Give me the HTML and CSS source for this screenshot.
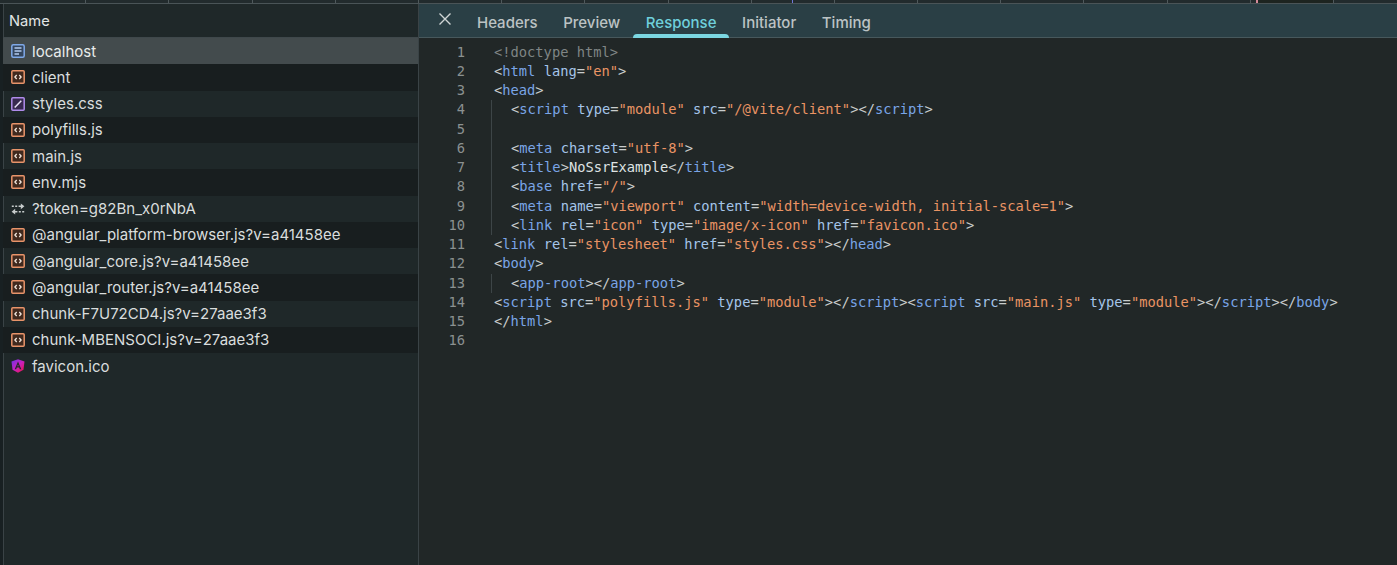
FILE: index.html
```html
<!DOCTYPE html>
<html lang="en">
<head>
    <meta charset="UTF-8">
    <title>Network - Response</title>
    <link rel="stylesheet" href="styles.css">
</head>
<body>
    <svg class="defs" width="0" height="0">
        <defs>
            <linearGradient id="ngFill" x1="0" y1="0" x2="1" y2="1">
                <stop offset="0" stop-color="#6a34e8"/>
                <stop offset="0.5" stop-color="#c820c0"/>
                <stop offset="1" stop-color="#f0143c"/>
            </linearGradient>
            <symbol id="i-doc" viewBox="0 0 14 14">
                <rect x="0.8" y="0.8" width="12.400" height="12.400" rx="1.500" fill="#34465e" stroke="#7fa9e8" stroke-width="1.500"/>
                <path d="M3.500 4h7M3.500 7h7M3.500 10h4.500" stroke="#b2cbef" stroke-width="1.300" fill="none"/>
            </symbol>
            <symbol id="i-script" viewBox="0 0 14 14">
                <rect x="0.8" y="0.8" width="12.400" height="12.400" rx="1" fill="#40291e" stroke="#e8946a" stroke-width="1.500"/>
                <path d="M5.700 5 3.900 7l1.800 2M8.300 5l1.800 2-1.800 2" stroke="#f2e6dc" stroke-width="1.300" fill="none"/>
            </symbol>
            <symbol id="i-css" viewBox="0 0 14 14">
                <rect x="0.8" y="0.8" width="12.400" height="12.400" rx="1" fill="#38294f" stroke="#b08cea" stroke-width="1.500"/>
                <path d="M3.700 10.500 10.300 3.700" stroke="#e8e0f6" stroke-width="1.500" fill="none"/>
            </symbol>
            <symbol id="i-socket" viewBox="0 0 14 14">
                <path d="M.8 4.300h2M4.200 4.300h2M7.600 4.300h2.400M4 9.700h2.400M7.800 9.700h2M11.200 9.700h2" stroke="#c8cdcd" stroke-width="1.400" fill="none"/>
                <path d="M9.800 1.400 13.400 4.300 9.800 7.200zM4.200 6.800.6 9.700l3.600 2.900z" fill="#c8cdcd"/>
            </symbol>
            <symbol id="i-ng" viewBox="0 0 14 14">
                <path d="M7 .3 13.500 2.600 12.500 10.700 7 13.700 1.500 10.700.5 2.600z" fill="url(#ngFill)"/>
                <path d="M7 2.600 3.700 10.200h1.500l.6-1.700h2.400l.6 1.700h1.500zM6.300 7.300 7 5.500l.7 1.800z" fill="#20282a"/>
            </symbol>
        </defs>
    </svg>

    <div class="ruler">
        <span></span><span></span><span></span><span></span><span></span><span></span><span></span><span></span><span></span>
        <span class="half mark-blue"></span><span class="half"></span><span></span><span></span><span></span><span></span><span></span>
        <span class="mark-pink"></span><span class="late"></span>
    </div>

    <div class="panels">
        <div class="requests">
            <div class="name-head">Name</div>
            <div class="row selected"><svg class="ico"><use href="#i-doc"/></svg>localhost</div>
            <div class="row dark"><svg class="ico"><use href="#i-script"/></svg>client</div>
            <div class="row"><svg class="ico"><use href="#i-css"/></svg>styles.css</div>
            <div class="row dark"><svg class="ico"><use href="#i-script"/></svg>polyfills.js</div>
            <div class="row"><svg class="ico"><use href="#i-script"/></svg>main.js</div>
            <div class="row dark"><svg class="ico"><use href="#i-script"/></svg>env.mjs</div>
            <div class="row"><svg class="ico"><use href="#i-socket"/></svg>?token=g82Bn_x0rNbA</div>
            <div class="row dark"><svg class="ico"><use href="#i-script"/></svg>@angular_platform-browser.js?v=a41458ee</div>
            <div class="row"><svg class="ico"><use href="#i-script"/></svg>@angular_core.js?v=a41458ee</div>
            <div class="row dark"><svg class="ico"><use href="#i-script"/></svg>@angular_router.js?v=a41458ee</div>
            <div class="row"><svg class="ico"><use href="#i-script"/></svg>chunk-F7U72CD4.js?v=27aae3f3</div>
            <div class="row dark"><svg class="ico"><use href="#i-script"/></svg>chunk-MBENSOCI.js?v=27aae3f3</div>
            <div class="row"><svg class="ico"><use href="#i-ng"/></svg>favicon.ico</div>
        </div>

        <div class="detail">
            <div class="tabs">
                <svg class="close" width="14" height="14" viewBox="0 0 14 14"><path d="M1.500 1.500 12.500 12.500M12.500 1.500 1.500 12.500" stroke="#d0d5d5" stroke-width="1.400" fill="none"/></svg>
                <span class="tab">Headers</span>
                <span class="tab">Preview</span>
                <span class="tab active">Response</span>
                <span class="tab">Initiator</span>
                <span class="tab">Timing</span>
            </div>
            <div class="code">
                <div class="line"><span class="num">1</span><span class="txt doctype">&lt;!doctype html&gt;</span></div>
                <div class="line"><span class="num">2</span><span class="txt">&lt;<b>html</b> <i>lang</i>=<u>"en"</u>&gt;</span></div>
                <div class="line"><span class="num">3</span><span class="txt">&lt;<b>head</b>&gt;</span></div>
                <div class="line"><span class="num">4</span><span class="txt in">&lt;<b>script</b> <i>type</i>=<u>"module"</u> <i>src</i>=<u>"/@vite/client"</u>&gt;&lt;/<b>script</b>&gt;</span></div>
                <div class="line"><span class="num">5</span><span class="txt in"></span></div>
                <div class="line"><span class="num">6</span><span class="txt in">&lt;<b>meta</b> <i>charset</i>=<u>"utf-8"</u>&gt;</span></div>
                <div class="line"><span class="num">7</span><span class="txt in">&lt;<b>title</b>&gt;<em>NoSsrExample</em>&lt;/<b>title</b>&gt;</span></div>
                <div class="line"><span class="num">8</span><span class="txt in">&lt;<b>base</b> <i>href</i>=<u>"/"</u>&gt;</span></div>
                <div class="line"><span class="num">9</span><span class="txt in">&lt;<b>meta</b> <i>name</i>=<u>"viewport"</u> <i>content</i>=<u>"width=device-width, initial-scale=1"</u>&gt;</span></div>
                <div class="line"><span class="num">10</span><span class="txt in">&lt;<b>link</b> <i>rel</i>=<u>"icon"</u> <i>type</i>=<u>"image/x-icon"</u> <i>href</i>=<u>"favicon.ico"</u>&gt;</span></div>
                <div class="line"><span class="num">11</span><span class="txt">&lt;<b>link</b> <i>rel</i>=<u>"stylesheet"</u> <i>href</i>=<u>"styles.css"</u>&gt;&lt;/<b>head</b>&gt;</span></div>
                <div class="line"><span class="num">12</span><span class="txt">&lt;<b>body</b>&gt;</span></div>
                <div class="line"><span class="num">13</span><span class="txt in">&lt;<b>app-root</b>&gt;&lt;/<b>app-root</b>&gt;</span></div>
                <div class="line"><span class="num">14</span><span class="txt">&lt;<b>script</b> <i>src</i>=<u>"polyfills.js"</u> <i>type</i>=<u>"module"</u>&gt;&lt;/<b>script</b>&gt;&lt;<b>script</b> <i>src</i>=<u>"main.js"</u> <i>type</i>=<u>"module"</u>&gt;&lt;/<b>script</b>&gt;&lt;/<b>body</b>&gt;</span></div>
                <div class="line"><span class="num">15</span><span class="txt">&lt;/<b>html</b>&gt;</span></div>
                <div class="line"><span class="num">16</span><span class="txt"></span></div>
            </div>
        </div>
    </div>
</body>
</html>
```

FILE: styles.css
```css
* { margin: 0; padding: 0; box-sizing: border-box; }
html, body { height: 100%; overflow: hidden; }
body { font-family: Inter, "Noto Sans", sans-serif; background: #1f2728; color: #dfe3e3; display: flex; flex-direction: column; }
.defs { position: absolute; }

/* timeline ticks at the very top */
.ruler { height: 4px; flex: none; display: flex; padding-left: 3px; background: #222b2d; border-bottom: 1px solid #4a5457; }
.ruler span { width: 83.2px; flex: none; border-right: 1px solid #4f595c; }
.ruler .half { width: 41.6px; }
.ruler .mark-blue { border-right-color: #6f78d8; }
.ruler .mark-pink { width: 7px; border-right: 2px solid #d58a9a; }
.ruler .late { width: 76px; background: #1d2420; }

.panels { flex: 1; display: flex; min-height: 0; }

.requests { width: 419px; flex: none; border-left: 3px solid #182022; border-right: 1px solid #3a4346; background: #1f2829; box-shadow: inset 1px 0 0 #3a4346; }
.name-head { height: 34px; padding-left: 6px; font-size: 14.7px; line-height: 35px; color: #e3e6e6; border-bottom: 1px solid #3f484b; }
.row { height: 26.25px; display: flex; align-items: center; font-size: 15px; color: #d9dddd; white-space: nowrap; padding-left: 8px; }
.row.dark { background: #181e1f; }
.row.selected { background: #434b4d; color: #e8ebeb; }
.ico { width: 14px; height: 14px; flex: none; margin-right: 7px; }

.detail { flex: 1; min-width: 0; background: #212727; }
.tabs { height: 34px; display: flex; align-items: stretch; background: #2a3f45; border-bottom: 1px solid #47585c; padding-left: 19px; }
.close { align-self: center; margin: -3px 12.2px 0 0; }
.tab { padding: 5px 12.8px 0; font-size: 15px; font-weight: 500; line-height: 28px; color: #bcc3c4; position: relative; }
.tab.active { color: #6fd0dc; }
.tab.active::after { content: ""; position: absolute; left: 0; right: 0; bottom: -1px; height: 4px; background: #7bd7e2; border-radius: 4px 4px 0 0; }

.code { padding-top: 4.6px; font-family: "DejaVu Sans Mono", "Liberation Mono", monospace; font-size: 13.74px; line-height: 19.25px; color: #c9cdcd; }
.line { display: flex; height: 19.25px; white-space: pre; }
.num { width: 46px; margin-right: 26px; flex: none; text-align: right; color: #8b9191; }
.txt { padding-left: 3px; }
.txt.in { padding-left: 19px; border-left: 1px solid #3d4547; }
.doctype { color: #7f8585; }
.txt b { font-weight: normal; color: #7aa5e6; }
.txt i { font-style: normal; color: #a5c5ea; }
.txt u { text-decoration: none; color: #ea9464; }
.txt em { font-style: normal; color: #dfe3e3; }
```
